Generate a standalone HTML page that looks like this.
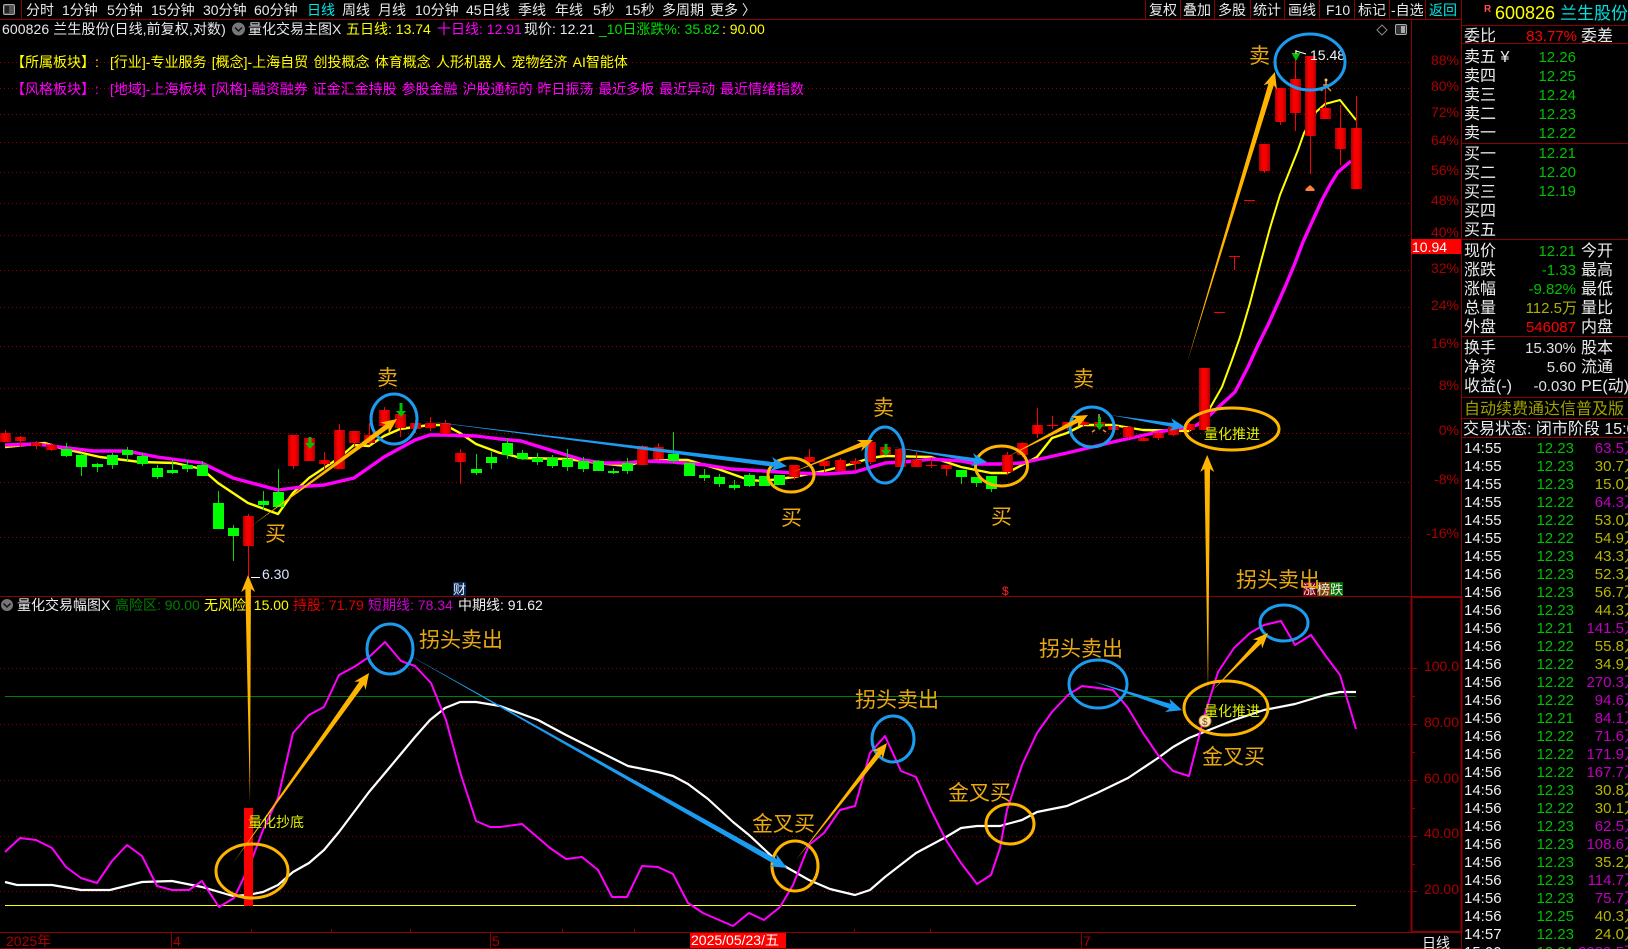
<!DOCTYPE html>
<html lang="zh-CN">
<head>
<meta charset="utf-8">
<title>600826 兰生股份</title>
<style>
html,body{margin:0;padding:0;background:#000;width:1628px;height:949px;overflow:hidden}
svg{display:block;position:absolute;left:0;top:0}
text{font-family:"Liberation Sans","Noto Sans CJK SC",sans-serif;font-size:14px;white-space:pre}
.tb text{fill:#e8e8e8}
.ax text{fill:#a80000;font-size:14px;text-anchor:end}
.an text{fill:#eaa910;font-size:21px}
.lb text{fill:#ececec;font-size:16px}
.v text{font-size:15px;text-anchor:end}
.tk text{font-size:15px}
.tk .t{fill:#f0f0f0}
.tk .p{fill:#00c000;text-anchor:end}
.tk .o{fill:#b8b800;text-anchor:end}
.tk .m{fill:#c000c0;text-anchor:end}
</style>
</head>
<body>
<svg width="1628" height="949" viewBox="0 0 1628 949" xmlns="http://www.w3.org/2000/svg">
<defs>
<linearGradient id="r" x1="0" x2="1" y1="0" y2="0"><stop offset="0" stop-color="#b00000"/><stop offset=".35" stop-color="#ff0000"/><stop offset=".7" stop-color="#f00000"/><stop offset="1" stop-color="#a80000"/></linearGradient>
</defs>
<rect width="1628" height="949" fill="#000"/>

<!-- grid -->
<path d="M0 62.5H1411M0 88.5H1411M0 114.5H1411M0 142.5H1411M0 172.5H1411M0 203.5H1411M0 235.5H1411M0 270.5H1411M0 307.5H1411M0 346.5H1411M0 388.5H1411M0 433.5H1411M0 482.5H1411M0 537.5H1411M0 668.5H1411M0 724.5H1411M0 780.5H1411M0 836.5H1411M0 891.5H1411" stroke="#a00000" stroke-width="1" stroke-dasharray="1 3" fill="none"/>

<!-- frame -->
<g fill="none" stroke="#8b0000" stroke-width="1">
<path d="M0 19.5H1461M1411.5 19V597M1461.5 0V949M0 596.5H1411M0 932.5H1461M0 948.5H1461"/>
<path d="M1461 25.5H1628M1461 43.5H1628M1461 143.5H1628M1461 239.5H1628M1461 336.5H1628M1461 397.5H1628M1461 418.5H1628M1461 437.5H1628"/>
<path d="M21.5 0V19M1145.5 0V19M1180.5 0V19M1214.5 0V19M1250.5 0V19M1284.5 0V19M1319.5 0V19M1354.5 0V19M1389.5 0V19M1425.5 0V19"/>
<path d="M171.5 933V948M490.5 933V948M1081.5 933V948M251.5 929V932M331.5 929V932M410.5 929V932M562.5 929V932M634.5 929V932M854.5 929V932M930.5 929V932"/>
</g>
<rect x="1411.5" y="597" width="50" height="335" fill="none" stroke="#8b0000" stroke-width="2"/>
<path d="M1411 668.5h6M1411 696.5h4M1411 724.5h6M1411 752.5h4M1411 780.5h6M1411 808.5h4M1411 836.5h6M1411 864.5h4M1411 891.5h6" stroke="#8b0000" fill="none"/>

<!-- toolbar -->
<rect x="3.5" y="4.5" width="11" height="10" rx="1.5" fill="#555" stroke="#aaa"/>
<rect x="5" y="6" width="4" height="7" fill="#222"/>
<g class="tb">
<text x="26" y="15">分时</text><text x="62" y="15">1分钟</text><text x="107" y="15">5分钟</text><text x="151" y="15">15分钟</text><text x="203" y="15">30分钟</text><text x="254" y="15">60分钟</text>
<text x="307" y="15" style="fill:#00e8e8">日线</text>
<text x="342" y="15">周线</text><text x="378" y="15">月线</text><text x="415" y="15">10分钟</text><text x="466" y="15">45日线</text><text x="518" y="15">季线</text><text x="555" y="15">年线</text><text x="593" y="15">5秒</text><text x="625" y="15">15秒</text><text x="662" y="15">多周期</text><text x="710" y="15">更多 〉</text>
<text x="1149" y="15">复权</text><text x="1183" y="15">叠加</text><text x="1218" y="15">多股</text><text x="1253" y="15">统计</text><text x="1288" y="15">画线</text><text x="1326" y="15">F10</text><text x="1358" y="15">标记</text><text x="1391" y="15">-自选</text>
<text x="1429" y="15" style="fill:#00e8e8">返回</text>
</g>

<!-- row 2 -->
<text x="2" y="34" fill="#e8e8e8" style="letter-spacing:.1px">600826 兰生股份(日线,前复权,对数)</text>
<circle cx="238.5" cy="29" r="6.5" fill="#777"/><path d="M235 27.5l3.5 3.5 3.5-3.5" stroke="#111" stroke-width="1.5" fill="none"/>
<text x="248" y="34" fill="#e8e8e8">量化交易主图X</text>
<text x="346" y="34" fill="#ffff00">五日线: 13.74</text>
<text x="437" y="34" fill="#ff00ff">十日线: 12.91</text>
<text x="524" y="34" fill="#e8e8e8">现价: 12.21</text>
<text x="599" y="34" fill="#00e000">_10日涨跌%: 35.82</text>
<text x="722" y="34" fill="#ffff00">: 90.00</text>
<text x="11" y="67" fill="#ffff00">【所属板块】:</text>
<text x="110" y="67" fill="#ffff00" style="word-spacing:1.4px">[行业]-专业服务 [概念]-上海自贸 创投概念 体育概念 人形机器人 宠物经济 AI智能体</text>
<text x="11" y="94" fill="#ff00ff">【风格板块】:</text>
<text x="110" y="94" fill="#ff00ff" style="word-spacing:1px">[地域]-上海板块 [风格]-融资融券 证金汇金持股 参股金融 沪股通标的 昨日振荡 最近多板 最近异动 最近情绪指数</text>

<path d="M1382 25l5 5-5 5-5-5z" fill="none" stroke="#888"/>
<rect x="1395.5" y="24.5" width="11" height="10" rx="1.5" fill="#333" stroke="#aaa"/><rect x="1401" y="26" width="4" height="7" fill="#aaa"/>

<!-- main MAs -->
<polyline fill="none" stroke="#ffff00" stroke-width="2.4" stroke-linejoin="round" points="5,447 45,443 60,448 100,457 140,462 175,463 202,469 218,483 248,503 278,514 293,493 309,478 339,458 354,445 369,446 384,436 400,429 430,425 445,425 460,433 476,444 500,453 506,454 521,458 567,459 598,463 627,466 643,461 673,460 688,460 718,469 749,480 764,481 794,477 824,471 855,463 870,458 885,456 931,457 961,467 991,473 1007,473 1022,465 1037,457 1052,438 1067,433 1083,425 1113,425 1143,430 1189,431"/>
<polyline fill="none" stroke="#ffff00" stroke-width="2" stroke-linejoin="round" points="1189,431 1200,422 1210,408 1222,387 1232,360 1240,337 1250,303 1260,265 1270,228 1280,195 1298,150 1304,133 1316,112 1325,104 1340,100 1356,120"/>
<polyline fill="none" stroke="#ff00ff" stroke-width="3.4" stroke-linejoin="round" points="5,445 36,444 60,447 93,451 127,451 157,457 187,461 202,463 233,478 278,490 309,486 324,485 354,478 384,457 415,440 430,435 445,435 476,436 500,439 521,441 550,450 583,460 605,463 627,463 643,461 673,462 706,465 731,469 764,471 794,473 825,474 855,472 885,463 916,461 931,459 961,461 976,464 1000,464 1022,463 1067,453 1113,442 1158,432 1190,427 1197,425 1210,415 1223,403 1235,392 1248,367 1258,345 1268,325 1277,305 1285,287 1295,263 1303,242 1312,222 1322,200 1330,185 1338,172 1351,161"/>

<!-- candles: wicks -->
<path fill="none" stroke="#ff0000" d="M5.5 430V442M20.5 436V447M36.5 441V449M51.5 443V451M248.5 514V577M293.5 435V469M309.5 438V461M324.5 452V469M339.5 424V469M354.5 431V446M369.5 423V445M384.5 407V426M400.5 404V437M415.5 420V433M430.5 417V431M445.5 420V434M460.5 449V484M642.5 445V465M658.5 443V460M794.5 465V480M809.5 449V465M824.5 461V472M840.5 458V471M855.5 458V471M870.5 441V464M885.5 447V455M900.5 449V467M916.5 452V467M931.5 458V468M946.5 465V476M1007.5 452V475M1022.5 442V457M1037.5 408V438M1052.5 416V429M1067.5 422V430M1083.5 420V426M1099.5 416V428M1113.5 424V432M1128.5 426V439M1143.5 436V441M1158.5 431V440M1173.5 425V436M1189.5 423V431M1234.5 256V270M1264.5 144V173M1280.5 88V125M1295.5 50V131M1310.5 56V174M1325.5 87V119M1340.5 105V165M1356.5 96V189"/>
<path fill="none" stroke="#ff0000" d="M926 465.5h11M1047 425.5h11M1214 312.5h11M1229 256.5h11M1244 200.5h11"/>
<path fill="none" stroke="#00e000" d="M66.5 443V457M81.5 453V476M97.5 463V472M112.5 453V469M127.5 447V461M142.5 453V466M157.5 465V479M172.5 460V474M187.5 460V472M202.5 461V476M218.5 491V529M233.5 525V561M263.5 491V510M278.5 469V507M476.5 454V475M491.5 452V469M507.5 438V459M522.5 450V460M537.5 453V465M552.5 455V468M567.5 449V471M583.5 457V472M598.5 460V471M613.5 468V474M627.5 458V474M673.5 432V463M689.5 463V476M704.5 469V481M719.5 474V487M734.5 480V490M749.5 473V487M764.5 476V486M779.5 475V485M961.5 470V484M976.5 477V487M991.5 476V492"/>
<!-- candles: bodies -->
<g fill="url(#r)">
<rect x="0" y="433" width="11" height="9"/><rect x="15" y="437" width="11" height="4"/><rect x="31" y="443" width="11" height="3"/><rect x="46" y="445" width="11" height="5"/>
<rect x="243" y="516" width="11" height="30"/><rect x="288" y="435" width="11" height="31"/><rect x="304" y="438" width="11" height="23"/><rect x="319" y="460" width="11" height="4"/><rect x="334" y="430" width="11" height="39"/><rect x="349" y="431" width="11" height="12"/><rect x="364" y="435" width="11" height="8"/><rect x="379" y="410" width="11" height="16"/><rect x="395" y="414" width="11" height="14"/><rect x="410" y="423" width="11" height="6"/><rect x="425" y="423" width="11" height="5"/><rect x="440" y="423" width="11" height="11"/><rect x="455" y="453" width="11" height="9"/>
<rect x="637" y="446" width="11" height="19"/><rect x="653" y="447" width="11" height="12"/><rect x="789" y="465" width="11" height="12"/><rect x="804" y="457" width="11" height="5"/><rect x="819" y="461" width="11" height="5"/><rect x="835" y="460" width="11" height="11"/><rect x="850" y="461" width="11" height="3"/><rect x="865" y="442" width="11" height="20"/><rect x="880" y="447" width="11" height="8"/><rect x="895" y="449" width="11" height="18"/><rect x="911" y="460" width="11" height="7"/><rect x="941" y="465" width="11" height="4"/>
<rect x="1002" y="455" width="11" height="17"/><rect x="1017" y="443" width="11" height="12"/><rect x="1032" y="425" width="11" height="9"/><rect x="1062" y="422" width="11" height="5"/><rect x="1078" y="422" width="11" height="3"/><rect x="1094" y="422" width="11" height="5"/><rect x="1108" y="426" width="11" height="4"/><rect x="1123" y="427" width="11" height="10"/><rect x="1138" y="438" width="11" height="3"/><rect x="1153" y="433" width="11" height="5"/><rect x="1168" y="427" width="11" height="8"/><rect x="1184" y="424" width="11" height="6"/><rect x="1199" y="368" width="11" height="62"/>
<rect x="1259" y="144" width="11" height="27"/><rect x="1275" y="88" width="11" height="34"/><rect x="1290" y="79" width="11" height="34"/><rect x="1305" y="56" width="11" height="80"/><rect x="1320" y="108" width="11" height="11"/><rect x="1335" y="128" width="11" height="21"/><rect x="1351" y="128" width="11" height="61"/>
</g>
<g fill="#00ff00">
<rect x="61" y="449" width="11" height="7"/><rect x="76" y="455" width="11" height="12"/><rect x="92" y="464" width="11" height="3"/><rect x="107" y="455" width="11" height="10"/><rect x="122" y="450" width="11" height="5"/><rect x="137" y="456" width="11" height="8"/><rect x="152" y="468" width="11" height="9"/><rect x="167" y="470" width="11" height="3"/><rect x="182" y="465" width="11" height="4"/><rect x="197" y="465" width="11" height="11"/><rect x="213" y="503" width="11" height="26"/><rect x="228" y="528" width="11" height="8"/><rect x="258" y="501" width="11" height="4"/><rect x="273" y="492" width="11" height="15"/><rect x="471" y="469" width="11" height="4"/><rect x="486" y="457" width="11" height="6"/>
<rect x="502" y="443" width="11" height="12"/><rect x="517" y="453" width="11" height="6"/><rect x="532" y="458" width="11" height="4"/><rect x="547" y="458" width="11" height="8"/><rect x="562" y="459" width="11" height="8"/><rect x="578" y="461" width="11" height="8"/><rect x="593" y="461" width="11" height="10"/><rect x="608" y="471" width="11" height="2"/><rect x="622" y="463" width="11" height="8"/><rect x="668" y="454" width="11" height="7"/><rect x="684" y="463" width="11" height="13"/><rect x="699" y="475" width="11" height="3"/><rect x="714" y="477" width="11" height="7"/><rect x="729" y="485" width="11" height="3"/><rect x="744" y="475" width="11" height="11"/><rect x="759" y="476" width="11" height="10"/><rect x="774" y="475" width="11" height="10"/><rect x="956" y="470" width="11" height="7"/><rect x="971" y="477" width="11" height="6"/><rect x="986" y="476" width="11" height="13"/>
</g>

<!-- green markers -->
<g fill="#00c000">
<path d="M399.5 403h3v8h3.5l-5 6-5-6h3.500z"/>
<path d="M308.500 437h3v6h3.500l-5 6-5-6h3.500z"/>
<path d="M884.500 444h3v6h3.500l-5 6-5-6h3.500z"/>
<path d="M1098 417h3v7h3.500l-5 6-5-6h3.500z"/>
<path d="M1291.500 53h9l-4.500 8z"/>
</g>
<path d="M1310 185l4.500 4v2h-9v-2z" fill="#ff8040"/>
<g stroke="#e09040" stroke-width="1.500" fill="none"><path d="M1326 81v5l-5 5M1326 86l5 5M1323 85h6"/><path d="M1092 432l3-2M1106 432l-3-2M1099 414v3"/></g>
<circle cx="1326" cy="80" r="1.500" fill="#ffc080"/>
<path d="M1296 50v4M1296 51l10 3" stroke="#fff" fill="none"/>
<text x="1310" y="60" fill="#f0f4ff">15.48</text>
<path d="M251 577.500H260" stroke="#fff"/>
<text x="262" y="579" fill="#d8e8ff">6.30</text>

<!-- badges -->
<rect x="453" y="582" width="13" height="14" fill="#0a2c5a"/><text x="453" y="594" fill="#e8f0ff" style="font-size:13px">财</text>
<text x="1002" y="595" fill="#ff2020" style="font-size:12px">$</text>
<rect x="1303" y="582" width="13" height="14" fill="#7a0010"/><rect x="1317" y="582" width="13" height="14" fill="#7a4000"/><rect x="1330" y="582" width="13" height="14" fill="#007000"/>
<text x="1303" y="594" fill="#f0e8e8" style="font-size:13px">涨</text><text x="1317" y="594" fill="#f0e8e8" style="font-size:13px">榜</text><text x="1330" y="594" fill="#f0e8e8" style="font-size:13px">跌</text>

<!-- sub header -->
<circle cx="7" cy="605" r="6" fill="#777"/><path d="M3.500 603.500l3.500 3.500 3.500-3.500" stroke="#111" stroke-width="1.500" fill="none"/>
<text x="17" y="610" fill="#f0f0f0">量化交易幅图X</text>
<text x="115" y="610" fill="#008000">高险区: 90.00</text>
<text x="204" y="610" fill="#ffff00">无风险: 15.00</text>
<text x="293" y="610" fill="#e00000">持股: 71.79</text>
<text x="368" y="610" fill="#d000d0">短期线: 78.34</text>
<text x="458" y="610" fill="#f0f0f0">中期线: 91.62</text>

<!-- sub lines -->
<path d="M5 696.500H1356" stroke="#008000" stroke-width="1"/>
<path d="M5 905.500H1356" stroke="#ffff00" stroke-width="1"/>
<polyline fill="none" stroke="#ffffff" stroke-width="2.200" stroke-linejoin="round" points="5,882 17,885 52,885 81,890 110,890 142,882 172,881 202,887 233,896 248,895 263,892 278,885 293,872 309,863 324,850 339,832 354,812 369,792 385,773 400,755 415,737 430,720 445,708 460,702 476,702 500,706 538,720 566,735 600,752 628,766 658,772 673,776 688,784 708,799 733,822 749,835 779,863 809,880 830,889 855,895 870,890 885,877 916,853 946,837 961,828 977,826 1000,826 1007,824 1022,820 1037,812 1067,806 1097,793 1128,778 1158,758 1173,747 1189,738 1204,732 1234,720 1264,710 1295,704 1325,695 1340,692 1356,692"/>
<polyline fill="none" stroke="#ff00ff" stroke-width="2" stroke-linejoin="round" points="5,852 20,838 36,840 52,848 66,867 81,878 97,883 112,861 127,845 142,856 157,886 172,890 189,890 202,881 219,907 234,898 249,867 263,830 278,798 293,733 309,715 324,707 339,675 354,667 369,657 385,642 401,661 415,666 431,683 446,720 461,775 476,821 490,827 500,827 522,824 550,848 566,859 582,857 598,870 612,897 627,897 642,866 658,867 673,874 688,903 703,913 733,926 749,913 764,920 780,907 793,885 809,845 824,833 840,810 855,806 870,753 885,736 901,771 916,777 931,810 946,840 961,863 977,884 991,875 1000,848 1007,810 1022,765 1037,733 1052,712 1068,695 1082,686 1098,688 1113,690 1128,708 1143,733 1158,755 1173,771 1189,776 1204,717 1218,672 1234,648 1250,633 1264,625 1281,621 1295,645 1311,635 1325,655 1340,675 1356,729"/>
<rect x="244" y="808" width="9" height="98" fill="#ff0000"/>

<!-- ellipses -->
<g fill="none" stroke="#1c9cf0" stroke-width="3">
<ellipse cx="394" cy="419" rx="23" ry="25"/><ellipse cx="1310" cy="62" rx="35" ry="28"/><ellipse cx="885" cy="455" rx="19" ry="28"/><ellipse cx="1092" cy="427" rx="22" ry="20"/>
<ellipse cx="390" cy="649" rx="23" ry="25"/><ellipse cx="893" cy="739" rx="21" ry="23"/><ellipse cx="1098" cy="684" rx="29" ry="24"/><ellipse cx="1284" cy="623" rx="24" ry="18"/>
</g>
<g fill="none" stroke="#ffb400" stroke-width="3">
<ellipse cx="791" cy="475" rx="23" ry="17"/><ellipse cx="1001.500" cy="466" rx="26" ry="20"/><ellipse cx="1232" cy="429" rx="47" ry="21"/>
<ellipse cx="252" cy="871" rx="36" ry="27"/><ellipse cx="795" cy="866" rx="23" ry="25"/><ellipse cx="1010" cy="824" rx="24" ry="20"/><ellipse cx="1226" cy="708" rx="42" ry="27"/>
</g>

<!-- orange arrows -->
<g fill="#ffb400">
<path transform="translate(250 527) rotate(-36.300)" d="M0 0L170 -2.500L167 -7L182.400 0L167 7L170 2.500Z"/>
<path transform="translate(250 803) rotate(-90.500)" d="M0 0L214 -2.800L211 -7L228 0L211 7L214 2.800Z"/>
<path transform="translate(793 472) rotate(-21.800)" d="M0 0L74 -2.300L71 -6L86.200 0L71 6L74 2.300Z"/>
<path transform="translate(1187 363) rotate(-73.200)" d="M0 0L291 -2.800L288 -7L304 0L288 7L291 2.800Z"/>
<path transform="translate(1007 457) rotate(-27.400)" d="M0 0L79 -2.300L76 -6.500L91.200 0L76 6.500L79 2.300Z"/>
<path transform="translate(1208 693) rotate(-90.200)" d="M0 0L224 -2.800L221 -7L238 0L221 7L224 2.800Z"/>
<path transform="translate(233 863) rotate(-54.400)" d="M0 0L221 -2.800L218 -7L233.700 0L218 7L221 2.800Z"/>
<path transform="translate(796 860) rotate(-52.100)" d="M0 0L136 -2.500L133 -6.500L148.200 0L133 6.500L136 2.500Z"/>
<path transform="translate(1213 690) rotate(-46)" d="M0 0L67 -2.500L64 -6.500L79.200 0L64 6.500L67 2.500Z"/>
</g>
<g fill="#1c9cf0">
<path transform="translate(417 420) rotate(7.100)" d="M0 0L360 -2.300L357 -7L372.800 0L357 7L360 2.300Z"/>
<path transform="translate(892 447) rotate(9)" d="M0 0L84 -2L81 -6.500L96.200 0L81 6.500L84 2Z"/>
<path transform="translate(1110 415) rotate(9.100)" d="M0 0L64 -2L61 -6.500L76 0L61 6.500L64 2Z"/>
<path transform="translate(400 650) rotate(29.400)" d="M0 0L431 -2.800L428 -7L444.200 0L428 7L431 2.800Z"/>
<path transform="translate(1092 681) rotate(17.900)" d="M0 0L82 -2.500L79 -7L94.600 0L79 7L82 2.500Z"/>
</g>

<!-- coin -->
<circle cx="1205" cy="721" r="6" fill="#f5e6b0" stroke="#c08030"/><text x="1202" y="725" fill="#904020" style="font-size:10px">$</text>

<!-- annotations -->
<g class="an">
<text x="377" y="385">卖</text><text x="265" y="541">买</text><text x="873" y="415">卖</text><text x="781" y="525">买</text><text x="991" y="524">买</text><text x="1073" y="386">卖</text><text x="1249" y="63">卖</text>
<text x="419" y="647">拐头卖出</text><text x="855" y="707">拐头卖出</text><text x="1039" y="656">拐头卖出</text><text x="1236" y="587">拐头卖出</text>
<text x="752" y="831">金叉买</text><text x="948" y="800">金叉买</text><text x="1202" y="764">金叉买</text>
</g>
<g fill="#e0f000">
<text x="1204" y="439">量化推进</text><text x="1204" y="716">量化推进</text><text x="248" y="827">量化抄底</text>
</g>

<!-- axis labels -->
<g class="ax">
<text x="1459" y="65">88%</text><text x="1459" y="91">80%</text><text x="1459" y="117">72%</text><text x="1459" y="145">64%</text><text x="1459" y="175">56%</text><text x="1459" y="205">48%</text><text x="1459" y="237">40%</text><text x="1459" y="273">32%</text><text x="1459" y="310">24%</text><text x="1459" y="348">16%</text><text x="1459" y="390">8%</text><text x="1459" y="435">0%</text><text x="1459" y="484">-8%</text><text x="1459" y="538">-16%</text>
<text x="1459" y="671">100.0</text><text x="1459" y="727">80.00</text><text x="1459" y="783">60.00</text><text x="1459" y="838">40.00</text><text x="1459" y="894">20.00</text>
</g>
<rect x="1411" y="239" width="50" height="15" fill="#ff0000"/>
<text x="1412" y="252" fill="#fff">10.94</text>

<!-- date axis -->
<text x="6" y="946" fill="#a80000">2025年</text>
<text x="173" y="946" fill="#a80000">4</text>
<text x="492" y="946" fill="#a80000">5</text>
<text x="1083" y="946" fill="#a80000">7</text>
<rect x="690" y="933" width="96" height="15" fill="#ff0000"/>
<text x="691" y="945" fill="#fff">2025/05/23/五</text>
<text x="1422" y="948" fill="#f0f0f0">日线</text>

<!-- right panel -->
<text x="1484" y="12" fill="#ff5050" style="font-size:10px;font-weight:bold">R</text>
<text x="1495" y="19" fill="#ffff00" style="font-size:18px">600826</text>
<text x="1560" y="19" fill="#00e0e0" style="font-size:17px">兰生股份</text>
<g class="lb">
<text x="1464" y="41">委比</text><text x="1581" y="41">委差</text>
<text x="1464" y="62">卖五 ¥</text><text x="1464" y="81">卖四</text><text x="1464" y="100">卖三</text><text x="1464" y="119">卖二</text><text x="1464" y="138">卖一</text>
<text x="1464" y="159">买一</text><text x="1464" y="178">买二</text><text x="1464" y="197">买三</text><text x="1464" y="216">买四</text><text x="1464" y="235">买五</text>
<text x="1464" y="256">现价</text><text x="1464" y="275">涨跌</text><text x="1464" y="294">涨幅</text><text x="1464" y="313">总量</text><text x="1464" y="332">外盘</text>
<text x="1581" y="256">今开</text><text x="1581" y="275">最高</text><text x="1581" y="294">最低</text><text x="1581" y="313">量比</text><text x="1581" y="332">内盘</text>
<text x="1464" y="353">换手</text><text x="1464" y="372">净资</text><text x="1464" y="391">收益(-)</text>
<text x="1581" y="353">股本</text><text x="1581" y="372">流通</text><text x="1581" y="391">PE(动)</text>
<text x="1463" y="434">交易状态: 闭市阶段 15:00</text>
</g>
<text x="1464" y="414" fill="#a0a000" style="font-size:16px">自动续费通达信普及版</text>
<g class="v">
<text x="1577" y="41" fill="#ff0000">83.77%</text>
<g fill="#00c000">
<text x="1576" y="62">12.26</text><text x="1576" y="81">12.25</text><text x="1576" y="100">12.24</text><text x="1576" y="119">12.23</text><text x="1576" y="138">12.22</text>
<text x="1576" y="158">12.21</text><text x="1576" y="177">12.20</text><text x="1576" y="196">12.19</text>
<text x="1576" y="256">12.21</text><text x="1576" y="275">-1.33</text><text x="1576" y="294">-9.82%</text>
</g>
<text x="1577" y="313" fill="#b0b000">112.5万</text>
<text x="1576" y="332" fill="#ff0000">546087</text>
<g fill="#e0e0e0"><text x="1576" y="353">15.30%</text><text x="1576" y="372">5.60</text><text x="1576" y="391">-0.030</text></g>
</g>

<g class="tk">
<text class="t" x="1464" y="453">14:55</text><text class="p" x="1574" y="453">12.23</text><text class="m" x="1639" y="453">63.5万</text>
<text class="t" x="1464" y="471">14:55</text><text class="p" x="1574" y="471">12.23</text><text class="o" x="1639" y="471">30.7万</text>
<text class="t" x="1464" y="489">14:55</text><text class="p" x="1574" y="489">12.23</text><text class="o" x="1639" y="489">15.0万</text>
<text class="t" x="1464" y="507">14:55</text><text class="p" x="1574" y="507">12.22</text><text class="m" x="1639" y="507">64.3万</text>
<text class="t" x="1464" y="525">14:55</text><text class="p" x="1574" y="525">12.22</text><text class="o" x="1639" y="525">53.0万</text>
<text class="t" x="1464" y="543">14:55</text><text class="p" x="1574" y="543">12.22</text><text class="o" x="1639" y="543">54.9万</text>
<text class="t" x="1464" y="561">14:55</text><text class="p" x="1574" y="561">12.23</text><text class="o" x="1639" y="561">43.3万</text>
<text class="t" x="1464" y="579">14:56</text><text class="p" x="1574" y="579">12.23</text><text class="o" x="1639" y="579">52.3万</text>
<text class="t" x="1464" y="597">14:56</text><text class="p" x="1574" y="597">12.23</text><text class="o" x="1639" y="597">56.7万</text>
<text class="t" x="1464" y="615">14:56</text><text class="p" x="1574" y="615">12.23</text><text class="o" x="1639" y="615">44.3万</text>
<text class="t" x="1464" y="633">14:56</text><text class="p" x="1574" y="633">12.21</text><text class="m" x="1639" y="633">141.5万</text>
<text class="t" x="1464" y="651">14:56</text><text class="p" x="1574" y="651">12.22</text><text class="o" x="1639" y="651">55.8万</text>
<text class="t" x="1464" y="669">14:56</text><text class="p" x="1574" y="669">12.22</text><text class="o" x="1639" y="669">34.9万</text>
<text class="t" x="1464" y="687">14:56</text><text class="p" x="1574" y="687">12.22</text><text class="m" x="1639" y="687">270.3万</text>
<text class="t" x="1464" y="705">14:56</text><text class="p" x="1574" y="705">12.22</text><text class="m" x="1639" y="705">94.6万</text>
<text class="t" x="1464" y="723">14:56</text><text class="p" x="1574" y="723">12.21</text><text class="m" x="1639" y="723">84.1万</text>
<text class="t" x="1464" y="741">14:56</text><text class="p" x="1574" y="741">12.22</text><text class="m" x="1639" y="741">71.6万</text>
<text class="t" x="1464" y="759">14:56</text><text class="p" x="1574" y="759">12.22</text><text class="m" x="1639" y="759">171.9万</text>
<text class="t" x="1464" y="777">14:56</text><text class="p" x="1574" y="777">12.22</text><text class="m" x="1639" y="777">167.7万</text>
<text class="t" x="1464" y="795">14:56</text><text class="p" x="1574" y="795">12.23</text><text class="o" x="1639" y="795">30.8万</text>
<text class="t" x="1464" y="813">14:56</text><text class="p" x="1574" y="813">12.22</text><text class="o" x="1639" y="813">30.1万</text>
<text class="t" x="1464" y="831">14:56</text><text class="p" x="1574" y="831">12.23</text><text class="m" x="1639" y="831">62.5万</text>
<text class="t" x="1464" y="849">14:56</text><text class="p" x="1574" y="849">12.23</text><text class="m" x="1639" y="849">108.6万</text>
<text class="t" x="1464" y="867">14:56</text><text class="p" x="1574" y="867">12.23</text><text class="o" x="1639" y="867">35.2万</text>
<text class="t" x="1464" y="885">14:56</text><text class="p" x="1574" y="885">12.23</text><text class="m" x="1639" y="885">114.7万</text>
<text class="t" x="1464" y="903">14:56</text><text class="p" x="1574" y="903">12.23</text><text class="m" x="1639" y="903">75.7万</text>
<text class="t" x="1464" y="921">14:56</text><text class="p" x="1574" y="921">12.25</text><text class="o" x="1639" y="921">40.3万</text>
<text class="t" x="1464" y="939">14:57</text><text class="p" x="1574" y="939">12.23</text><text class="o" x="1639" y="939">24.0万</text>
<text class="t" x="1464" y="957">15:00</text><text class="p" x="1574" y="957">12.21</text><text class="m" x="1639" y="957">2989.5万</text>
</g>
</svg>
</body>
</html>
